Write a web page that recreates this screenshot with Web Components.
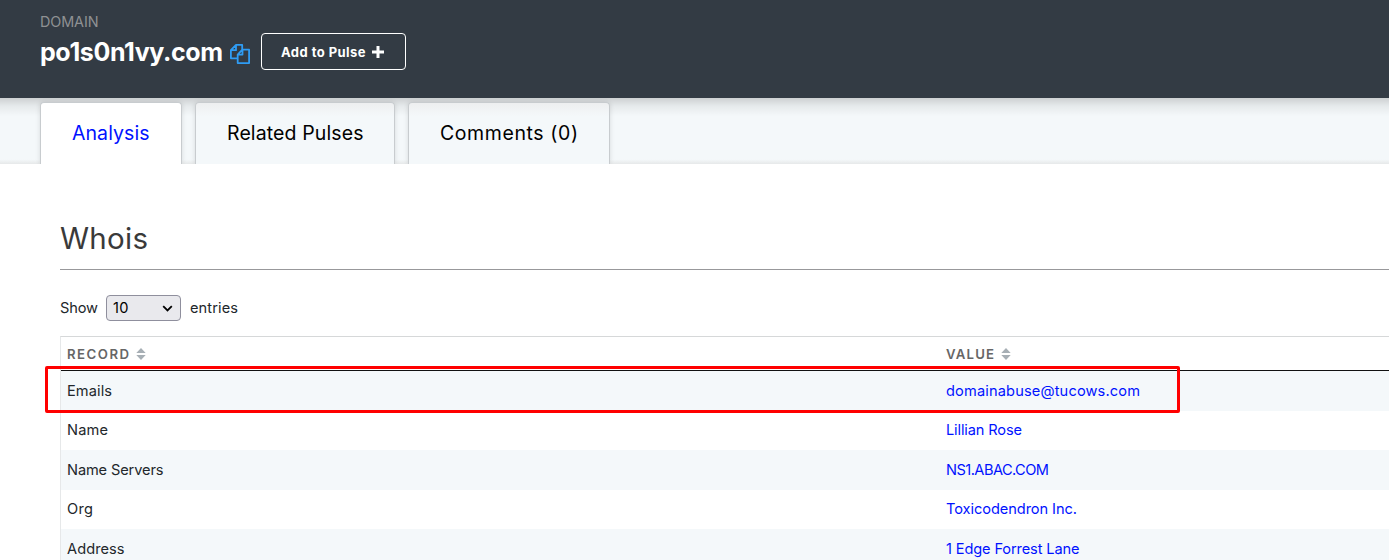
<!DOCTYPE html>
<html lang="en">
<head>
<meta charset="utf-8">
<title>po1s0n1vy.com</title>
<style>
html,body{margin:0;height:560px;overflow:hidden;background:#fff}
body{font-family:Inter,"Liberation Sans",sans-serif;font-size:14.6px;color:#22272b}
</style>
</head>
<body>
<indicator-page></indicator-page>
<script>
const define = (name, html, init) => {
  const t = document.createElement('template');
  t.innerHTML = html;
  customElements.define(name, class extends HTMLElement {
    connectedCallback() {
      if (this.shadowRoot) return;
      this.attachShadow({mode: 'open'}).append(t.content.cloneNode(true));
      if (init) init(this, this.shadowRoot);
    }
  });
};

/* A single line of text whose tracking is adjusted to a given measure. */
define('text-run', `<style>:host{display:inline-block;white-space:nowrap}span{display:inline-block}</style><span><slot></slot></span>`,
  (el, root) => {
    const s = root.querySelector('span');
    const w = +el.getAttribute('measure');
    const n = el.textContent.length;
    const fit = () => {
      s.style.letterSpacing = '0px';
      const gap = (w - s.getBoundingClientRect().width) / Math.max(1, n - 1);
      s.style.letterSpacing = gap + 'px';
      s.style.marginRight = -gap + 'px';
    };
    fit();
  });

define('copy-icon', `<style>:host{display:block;width:20px;height:20px}svg{display:block}</style>
<svg width="20" height="20" viewBox="0 0 20 20" fill="none" stroke="#2f9cf4" stroke-width="1.8" stroke-linejoin="round"><path d="M7.5 14.3H.9V6.2L6 .9H12.2V5.2M6 .9V6.2H.9M12.3 5.7H19.1V19.1H7.7V10.6ZM12.5 5.7V10.6H7.7"/></svg>`);

define('pulse-button', `<style>
:host{display:flex;align-items:center;box-sizing:border-box;width:145px;height:37px;border:1px solid #fff;border-radius:4px;padding:0 0 0 19px;color:#fff;font-size:13px;font-weight:700}
svg{margin-left:6px}
</style><slot></slot><svg width="12" height="12" viewBox="0 0 12 12"><path d="M4.5 0h3v4.5H12v3H7.5V12h-3V7.5H0v-3h4.5z" fill="#fff"/></svg>`);

define('domain-header', `<style>
:host{display:block;box-sizing:border-box;height:98px;padding:12px 0 0 40px;background:#333b44;box-shadow:0 2px 14px rgba(0,0,0,.34);position:relative;z-index:1}
.k{height:20px;line-height:20px;font-size:14.4px;color:#8f9193}
.r{display:flex;align-items:flex-start}
.t{font-size:25px;font-weight:650;line-height:40px;color:#fff;width:182px}
copy-icon{margin:12px 0 0 7.5px}
pulse-button{margin:1px 0 0 11.5px}
</style>
<div class="k"><text-run measure="58.5">DOMAIN</text-run></div>
<div class="r"><div class="t"><text-run measure="183">po1s0n1vy.com</text-run></div><copy-icon></copy-icon>
<pulse-button><text-run measure="84.5">Add to Pulse</text-run></pulse-button></div>`);

define('tab-item', `<style>
:host{display:block;box-sizing:border-box;height:62px;padding-left:31px;border:1px solid #c8cccf;border-bottom:0;border-radius:4px 4px 0 0;background:linear-gradient(#eeeff0,#f4f8fa 22%);color:#000;font-size:19.5px;font-weight:420;line-height:60px;box-shadow:0 0 5px rgba(0,0,0,.12)}
:host([active]){background:#fff;color:#0012ff}
</style><slot></slot>`);

define('tab-strip', `<style>
:host{display:flex;gap:13px;box-sizing:border-box;height:66px;padding:4px 0 0 40px;overflow:hidden;position:relative;z-index:2;background:linear-gradient(rgba(0,0,0,.16),rgba(0,0,0,.06) 8px,transparent 18px),linear-gradient(#f4f8fa 93%,#e6e8e9)}
.a{width:142px}.b{width:200px}.c{width:202px}
</style>
<tab-item class="a" active><text-run measure="77.5">Analysis</text-run></tab-item>
<tab-item class="b"><text-run measure="136.5">Related Pulses</text-run></tab-item>
<tab-item class="c"><text-run measure="138">Comments (0)</text-run></tab-item>`);

define('entries-select', `<style>
:host{display:flex;align-items:center;height:26px;margin-top:25px}
.s{display:flex;align-items:center;justify-content:space-between;box-sizing:border-box;width:75px;height:26px;border:1px solid #8f8f9d;border-radius:4px;background:#e9e9ed;color:#000;padding:0 7px 0 6px;margin:0 9px 0 8px}
</style>
<text-run measure="38">Show</text-run>
<div class="s"><text-run measure="15.5">10</text-run><svg width="11" height="7" viewBox="0 0 11 7"><path d="M1.2 1.2L5.5 5.4L9.8 1.2" fill="none" stroke="#000" stroke-width="1.8"/></svg></div>
<text-run measure="48">entries</text-run>`);

define('sort-heading', `<style>
:host{display:flex;align-items:center;gap:7px;font-size:13.2px;font-weight:600;color:#666}
</style><slot></slot><svg width="10" height="12" viewBox="0 0 10 12"><path d="M0.3 5L5 0L9.7 5zM0.3 7H9.7L5 12z" fill="#a7afb5"/></svg>`);

define('record-row', `<style>
:host{display:grid;grid-template-columns:879px 1fr;align-items:center;box-sizing:border-box;height:39px;padding:0 0 1px 6px}
:host([odd]){height:40px;padding-bottom:0;background:#f4f8fa}
::slotted([slot=value]){color:#0012ff}
</style><slot name="record"></slot><slot name="value"></slot>`);

define('whois-table', `<style>
:host{display:block;border-top:1px solid #d6d8d9;border-left:1px solid #e6e8e9;margin-top:15px}
.h{display:grid;grid-template-columns:879px 1fr;align-items:center;height:33px;padding-left:6px;border-bottom:1px solid #111}
</style>
<div class="h"><sort-heading><text-run measure="62">RECORD</text-run></sort-heading><sort-heading><text-run measure="48">VALUE</text-run></sort-heading></div>
<slot></slot>`);

define('red-outline', `<style>:host{position:absolute;left:45px;top:366px;width:1135px;height:47px;box-sizing:border-box;border:3px solid #f00;border-radius:2px;z-index:5}</style>`);

define('indicator-page', `<style>
:host{display:block;height:560px;overflow:hidden;position:relative}
main{padding:56px 0 0 60px}
h1{margin:0;height:49px;line-height:37px;border-bottom:1px solid #98989b;font-size:29.5px;font-weight:400;color:#3a3a3a}
</style>
<domain-header></domain-header>
<tab-strip></tab-strip>
<main>
<h1><text-run measure="88">Whois</text-run></h1>
<entries-select></entries-select>
<whois-table>
<record-row odd><text-run slot="record" measure="45">Emails</text-run><text-run slot="value" measure="194">domainabuse@tucows.com</text-run></record-row>
<record-row><text-run slot="record" measure="41">Name</text-run><text-run slot="value" measure="76">Lillian Rose</text-run></record-row>
<record-row odd><text-run slot="record" measure="96.5">Name Servers</text-run><text-run slot="value" measure="103">NS1.ABAC.COM</text-run></record-row>
<record-row><text-run slot="record" measure="26">Org</text-run><text-run slot="value" measure="131">Toxicodendron Inc.</text-run></record-row>
<record-row odd><text-run slot="record" measure="57.5">Address</text-run><text-run slot="value" measure="133.5">1 Edge Forrest Lane</text-run></record-row>
</whois-table>
</main>
<red-outline></red-outline>`);
</script>
</body>
</html>
